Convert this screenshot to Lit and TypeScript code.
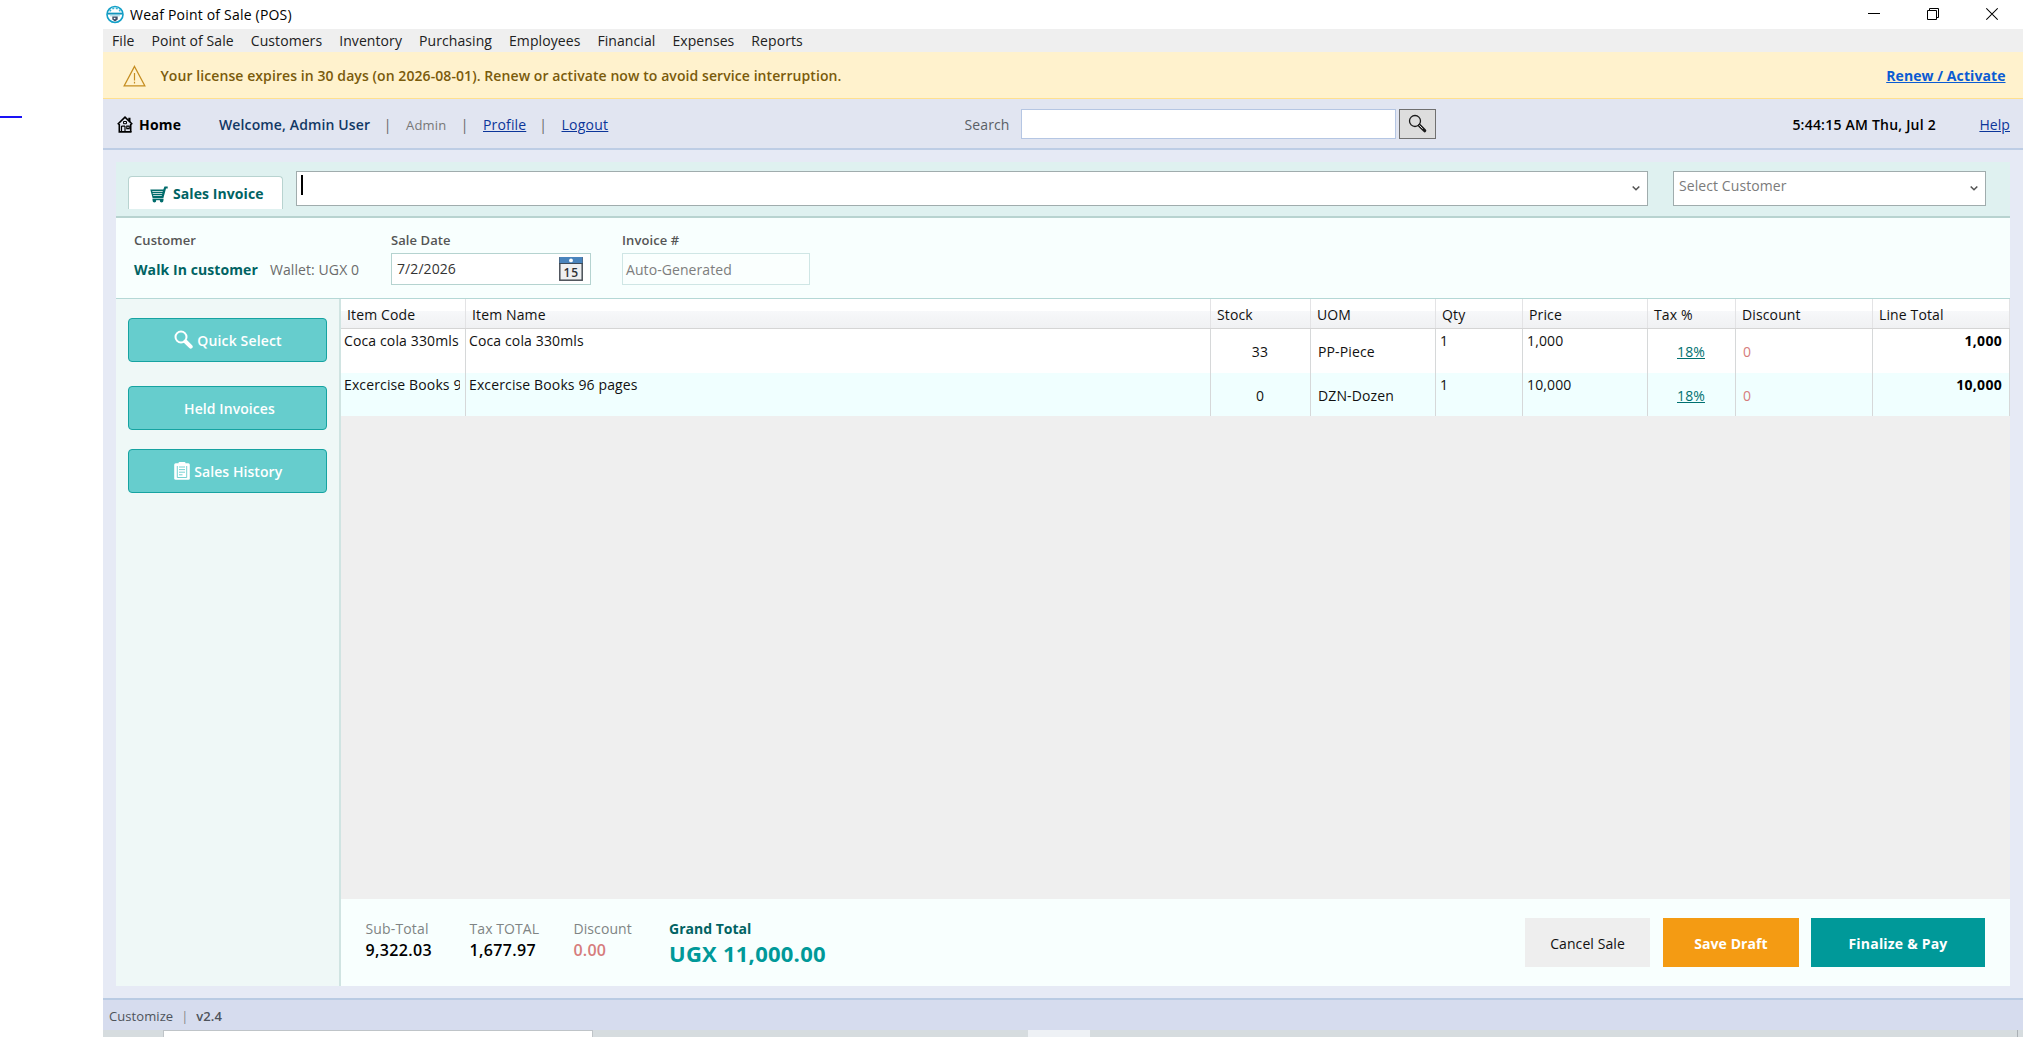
import { LitElement, html, css } from "lit";
import { customElement } from "lit/decorators.js";

const MENU = ["File", "Point of Sale", "Customers", "Inventory", "Purchasing", "Employees", "Financial", "Expenses", "Reports"];
const COLUMNS = ["Item Code", "Item Name", "Stock", "UOM", "Qty", "Price", "Tax %", "Discount", "Line Total"];
const ITEMS = [
  { code: "Coca cola 330mls", name: "Coca cola 330mls", stock: "33", uom: "PP-Piece", qty: "1", price: "1,000", tax: "18%", discount: "0", total: "1,000" },
  { code: "Excercise Books 96 pages", name: "Excercise Books 96 pages", stock: "0", uom: "DZN-Dozen", qty: "1", price: "10,000", tax: "18%", discount: "0", total: "10,000" },
];

const logoIcon = html`<svg class="logo" width="18" height="19" viewBox="0 0 18 19">
  <circle cx="9" cy="9.500" r="8" fill="#fff" stroke="#12a0c8" stroke-width="1.600"/>
  <path d="M3.800 6.300A6 6 0 0 1 14.200 6.300" fill="none" stroke="#35b3d2" stroke-width="1.500" stroke-dasharray="2 1.500"/>
  <path d="M1.500 8.600h15" stroke="#1295bd" stroke-width="1.900"/>
  <path d="M4 10.800h10" stroke="#9bd5e5" stroke-width="1"/>
  <path d="M6.300 11.600h5.400v3L9 16.600l-2.700-2z" fill="#3d4f68"/><path d="M7.800 12.800h1.600v1.300H7.800z" fill="#fff"/></svg>`;
const warnIcon = html`<svg class="warn" width="23" height="22" viewBox="0 0 23 22">
  <path d="M11.500 1.500 21.800 20.800H1.200z" fill="none" stroke="#c58d20" stroke-width="1.300"/>
  <path d="M11.500 8v7.500M11.500 16.800v1.600" stroke="#c58d20" stroke-width="1.200"/></svg>`;
const homeIcon = html`<svg class="home-icon" width="16" height="17" viewBox="0 0 16 17">
  <path d="M2.300 8v8h11.400V8M.7 8.300 8 1.200l7.300 7.100" fill="none" stroke="#000" stroke-width="1.600"/>
  <path d="M11.300 1.800h2.200v4.500l-2.200-2z" fill="#000"/>
  <path d="M6.500 5.500h3v2.200h-3z" fill="none" stroke="#000"/>
  <path d="M4.500 10v6M8 10v6M4.500 10.200H8M9.800 10.200h2.400v2.400H9.800zM2 15.500h12.500" fill="none" stroke="#000" stroke-width="1.200"/></svg>`;
const lensIcon = (cls: string) => html`<svg class=${cls} width="19" height="19" viewBox="0 0 19 19">
  <circle class="ring" cx="7" cy="7" r="5.500" fill="none" stroke="currentColor" stroke-width="1.300"/>
  <path class="handle" d="m11.500 11.500 5.200 5.200" fill="none" stroke="currentColor" stroke-width="3.200" stroke-linecap="round"/>
  <path class="shine" d="m11.300 11.300 3.400 3.400" stroke="#ddd" stroke-width="1"/></svg>`;
const cartIcon = html`<svg class="cart" width="18" height="17" viewBox="0 0 18 17">
  <path d="M.3 3.500h13L14.500.6H17.700v2H16L13.400 12H2.600z" fill="#006b6b"/>
  <path d="M2.300 5.500h10.400M2.700 7.500h9.600M3.200 9.500h8.600" stroke="#cfe3e2" stroke-width=".9"/>
  <path d="M2.500 13.400h11" stroke="#006b6b" stroke-width="1.600"/>
  <circle cx="4.400" cy="14.800" r="1.800" fill="#006b6b"/><circle cx="11.600" cy="14.800" r="1.800" fill="#006b6b"/></svg>`;
const clipIcon = html`<svg class="clip" width="16" height="18" viewBox="0 0 16 18">
  <rect x=".2" y="1.300" width="15.600" height="16.500" rx="1.500" fill="#fff"/><rect x="4.500" y="0" width="7" height="3.500" rx="1" fill="#fff"/>
  <path d="M3.300 4v11.500h9.400V4M5 5h6M5 7.600h6M5 10.200h6M5 12.800h3.500" fill="none" stroke="#66cdcd" stroke-width=".9"/></svg>`;
const calendarIcon = html`<svg class="calendar" width="24" height="24" viewBox="0 0 24 24">
  <rect x=".8" y=".8" width="22.400" height="22.400" fill="#eeeff1" stroke="#4a4f57" stroke-width="1.500"/>
  <rect x=".5" y="0" width="23" height="6.500" fill="#4a84bd"/><path d="M0 6.500h24" stroke="#3c4a5a"/><circle cx="12" cy="3.400" r="1.900" fill="#fff"/>
  <text x="12.200" y="19.500" text-anchor="middle" font-size="12" letter-spacing=".8" font-weight="600" fill="#2e3136">15</text></svg>`;
const chevron = html`<svg width="8" height="7" viewBox="0 0 8 7"><path d="M.7 1.500 4 4.700 7.300 1.500" fill="none" stroke="#555" stroke-width="1.600"/></svg>`;

@customElement("pos-titlebar")
class PosTitlebar extends LitElement {
  static styles = css`
    :host { display: block; }
    .title { height: 29px; display: flex; align-items: center; background: #fff; padding-left: 3px; }
    .name { margin-left: 6px; padding-top: 1px; flex: 1; letter-spacing: .2px; color: #000; }
    .controls { display: flex; gap: 47px; padding: 0 25px 1px 0; }
    .menu { display: flex; gap: 17px; height: 22.500px; padding-left: 9px; background: #efefef; color: #212121; line-height: 23px; }
  `;
  render() {
    return html`<div class="title">${logoIcon}<span class="name">Weaf Point of Sale (POS)</span>
      <div class="controls">
        <svg width="12" height="14"><path d="M0 6.500h12" stroke="#000"/></svg>
        <svg width="12" height="14"><path d="M.5 3.500h9v9h-9zM2.500 3.500v-2h9v9h-2" fill="none" stroke="#000"/></svg>
        <svg width="12" height="14"><path d="m.3 1.300 11.400 11.400M11.700 1.300.3 12.700" stroke="#000" stroke-width="1.100"/></svg>
      </div></div>
      <nav class="menu">${MENU.map((m) => html`<span>${m}</span>`)}</nav>`;
  }
}

@customElement("pos-header")
class PosHeader extends LitElement {
  static styles = css`
    :host { display: block; }
    .banner { box-sizing: border-box; height: 47.500px; display: flex; align-items: center; padding: 0 17.500px 0 20px; background: #fff2cd; border-bottom: 1.500px solid #ffe08f; color: #7a5b0b; font-weight: 600; }
    .banner span { padding-top: 1.500px; }
    .warn { margin-right: 14.500px; padding-top: 2px; }
    .msg { flex: 1; }
    .renew { color: #0a5bd3; font-weight: 700; text-decoration: underline; }
    .nav { box-sizing: border-box; height: 51px; display: flex; align-items: center; padding: 0 13px 0 14px; background: #e1e5f1; border-bottom: 2px solid #bdcde5; }
    .nav > span { padding-top: 2px; }
    .home-icon { padding-top: 1px; }
    .home { width: 42px; margin: 0 38px 0 6px; font-weight: 700; letter-spacing: .2px; color: #000; }
    .welcome { width: 150.500px; font-weight: 600; letter-spacing: .13px; color: #123865; }
    .sep { width: 36.500px; text-align: center; color: #666; }
    .role { width: 40.500px; font-size: 13px; letter-spacing: .2px; color: #777; }
    .link { color: #0c3599; text-decoration: underline; }
    .profile { width: 42px; letter-spacing: .15px; }
    .logout { flex: 1; letter-spacing: .25px; }
    .label { color: #5a5f66; margin-right: 12px; }
    .box { box-sizing: border-box; width: 375px; height: 30px; border: 1px solid #b5c6e3; background: #fff; }
    .find { box-sizing: border-box; width: 37px; height: 30px; margin: 0 356px 0 3px; border: 1px solid #707070; background: #ddd; color: #1a1a1a; display: grid; place-items: center; }
    .clock { width: 187px; font-weight: 600; letter-spacing: .22px; color: #000; }
  `;
  render() {
    return html`<div class="banner">${warnIcon}<span class="msg">Your license expires in 30 days (on 2026-08-01). Renew or activate now to avoid service interruption.</span><span class="renew">Renew / Activate</span></div>
      <div class="nav">${homeIcon}<span class="home">Home</span><span class="welcome">Welcome, Admin User</span><span class="sep">|</span><span class="role">Admin</span><span class="sep">|</span><span class="link profile">Profile</span><span class="sep">|</span><span class="logout"><span class="link">Logout</span></span>
        <span class="label">Search</span><div class="box"></div><div class="find">${lensIcon("lens")}</div>
        <span class="clock">5:44:15 AM Thu, Jul 2</span><span class="link">Help</span></div>`;
  }
}

@customElement("invoice-bar")
class InvoiceBar extends LitElement {
  static styles = css`
    :host { display: block; }
    .strip { box-sizing: border-box; height: 56px; display: flex; align-items: flex-start; padding: 9px 24px 0 12px; background: #dff1f0; border-bottom: 2px solid #b8d3d0; }
    .tab { box-sizing: border-box; width: 155px; height: 33px; margin: 5px 13px 0 0; border: 1.500px solid #b8d3d0; border-bottom: 0; border-radius: 4px 4px 0 0; background: #fff; display: flex; align-items: center; padding-left: 21px; gap: 5px; font-weight: 700; color: #006363; }
    .tab span { margin-top: 1px; }
    .cart { margin-top: 3px; }
    .combo { box-sizing: border-box; height: 35px; border: 1px solid #a0acad; background: #fff; display: flex; align-items: flex-start; padding: 4px 7px 0 4px; }
    .product { flex: 1; }
    .customer { width: 313px; margin-left: 25px; color: #7b7b7b; padding-left: 5px; }
    .fill { flex: 1; }
    .caret { width: 2px; height: 20px; margin-top: -1px; background: #000; }
    .combo svg { margin-top: 9px; }
    .info { box-sizing: border-box; height: 81px; display: flex; align-items: flex-start; padding: 13px 18px 0; background: #f8fffe; border-bottom: 1px solid #b5d8d6; }
    .label { font-size: 13px; line-height: 18px; font-weight: 600; color: #555; margin-bottom: 4px; }
    .who { width: 257px; }
    .value { height: 32px; display: flex; align-items: center; padding-top: 1px; }
    .walk { width: 136px; font-weight: 700; color: #006363; }
    .wallet { color: #6b6b6b; }
    .field { box-sizing: border-box; height: 32px; display: flex; align-items: center; background: #fff; }
    .date { width: 200px; margin-right: 31px; border: 1.500px solid #b5d3d0; padding: 0 7px 0 5px; color: #333; }
    .date .fill { padding-bottom: 1px; }
    .auto { width: 188px; border: 1px solid #cfe6e5; padding: 1.500px 3px 0; color: #7d7d7d; background: #fafffe; }
  `;
  render() {
    return html`<div class="strip"><div class="tab">${cartIcon}<span>Sales Invoice</span></div>
        <div class="combo product"><div class="caret"></div><div class="fill"></div>${chevron}</div>
        <div class="combo customer"><span class="fill">Select Customer</span>${chevron}</div></div>
      <div class="info">
        <div class="who"><div class="label">Customer</div><div class="value"><span class="walk">Walk In customer</span><span class="wallet">Wallet: UGX 0</span></div></div>
        <div><div class="label">Sale Date</div><div class="field date"><span class="fill">7/2/2026</span>${calendarIcon}</div></div>
        <div><div class="label">Invoice #</div><div class="field auto">Auto-Generated</div></div>
      </div>`;
  }
}

@customElement("side-actions")
class SideActions extends LitElement {
  static styles = css`
    :host { box-sizing: border-box; display: flex; flex-direction: column; width: 225px; padding: 18.500px 12px; background: #eff8f7; border-right: 2px solid #d0e4e2; }
    .btn { box-sizing: border-box; height: 44px; border: 1.500px solid #16a3a1; border-radius: 4px; background: #66cdcd; color: #fff; font-weight: 600; display: flex; align-items: center; justify-content: center; gap: 4px; }
    .held { margin: 24.500px 0 19px; padding-left: 4px; }
    .quick { padding-left: 1px; letter-spacing: .15px; }
    .history { padding-left: 1px; gap: 4.500px; }
    .btn span { padding-top: 2px; }
    .thick .ring { stroke-width: 2px; }
    .thick .handle { stroke-width: 4px; }
    .thick .shine { display: none; }
  `;
  render() {
    return html`<div class="btn quick">${lensIcon("thick")}<span>Quick Select</span></div>
      <div class="btn held"><span>Held Invoices</span></div>
      <div class="btn history">${clipIcon}<span>Sales History</span></div>`;
  }
}

@customElement("item-grid")
class ItemGrid extends LitElement {
  static styles = css`
    :host { display: block; flex: 1; background: #efefef; }
    .row { display: grid; grid-template-columns: 125px 745px 100px 125px 87px 125px 88px 137px 1fr; height: 44px; background: #fff; color: #111; letter-spacing: .13px; }
    .alt { height: 43px; background: #f0ffff; }
    .head { height: 30px; box-sizing: border-box; border-bottom: 1px solid #d5d5d5; background: linear-gradient(#fff 0 40%, #f7f8fa 40%, #f0f1f3); }
    .cell { box-sizing: border-box; border-right: 1px solid #d6d8d9; padding: 2px 4px 0 3px; line-height: 20px; white-space: nowrap; overflow: hidden; }
    .head .cell { border-color: #e3e3e5; line-height: 31px; padding: 0 0 0 6px; }
    .clip { overflow: hidden; width: 116px; }
    .row .mid { padding-top: 13px; }
    .center { text-align: center; }
    .uom, .disc { padding-left: 7px; }
    .qty, .price { padding-left: 4px; }
    .tax { color: #007070; text-decoration: underline; }
    .disc { color: #d67c7c; }
    .total { text-align: right; padding-right: 7px; font-weight: 700; letter-spacing: .3px; color: #000; }
  `;
  render() {
    return html`<div class="row head">${COLUMNS.map((c) => html`<div class="cell">${c}</div>`)}</div>
      ${ITEMS.map((r, i) => html`<div class="row ${i % 2 ? "alt" : ""}">
        <div class="cell"><div class="clip">${r.code}</div></div><div class="cell">${r.name}</div>
        <div class="cell mid center">${r.stock}</div><div class="cell mid uom">${r.uom}</div>
        <div class="cell qty">${r.qty}</div><div class="cell price">${r.price}</div>
        <div class="cell mid center"><span class="tax">${r.tax}</span></div><div class="cell mid disc">${r.discount}</div>
        <div class="cell total">${r.total}</div></div>`)}`;
  }
}

@customElement("totals-bar")
class TotalsBar extends LitElement {
  static styles = css`
    :host { box-sizing: border-box; display: flex; align-items: flex-start; height: 87px; padding: 19px 25px 0 24.500px; background: #f8fffe; }
    .sum { box-sizing: border-box; padding-top: 1px; color: #7f8484; line-height: 20px; }
    .sub { width: 104px; letter-spacing: .15px; }
    .tx { width: 104px; }
    .dis { width: 95.500px; }
    .num { font-size: 16px; line-height: 22px; font-weight: 600; letter-spacing: .35px; color: #000; }
    .red { color: #d67c7c; letter-spacing: .2px; }
    .grand { flex: 1; font-weight: 700; letter-spacing: 0; color: #006363; }
    .big { font-size: 22px; line-height: 28px; letter-spacing: .25px; color: #009999; }
    .btn { box-sizing: border-box; height: 49px; padding-top: 2px; display: grid; place-items: center; font-weight: 700; color: #fff; }
    .cancel { width: 125px; background: #eee; color: #111; font-weight: 400; }
    .draft { width: 136px; margin: 0 12px 0 13px; background: #f49b13; }
    .pay { width: 174px; background: #009999; letter-spacing: .2px; }
  `;
  render() {
    return html`<div class="sum sub">Sub-Total<div class="num">9,322.03</div></div>
      <div class="sum tx">Tax TOTAL<div class="num">1,677.97</div></div>
      <div class="sum dis">Discount<div class="num red">0.00</div></div>
      <div class="sum grand">Grand Total<div class="big">UGX 11,000.00</div></div>
      <div class="btn cancel">Cancel Sale</div><div class="btn draft">Save Draft</div><div class="btn pay">Finalize &amp; Pay</div>`;
  }
}

@customElement("app-root")
class AppRoot extends LitElement {
  static styles = css`
    :host { display: flex; width: 2023px; height: 1037px; overflow: hidden; background: #fff; font-family: "Open Sans", "Noto Sans", sans-serif; font-size: 14px; line-height: 20px; letter-spacing: .08px; color: #111; white-space: nowrap; }
    .margin { width: 103px; padding-top: 115.500px; box-sizing: border-box; }
    .dash { width: 22px; height: 2px; background: #1a12f5; }
    .window { flex: 1; display: flex; flex-direction: column; background: #e6eaf5; }
    .panel { flex: 1; min-height: 0; margin: 12px 13px 12px; display: flex; flex-direction: column; }
    .body { flex: 1; display: flex; min-height: 0; }
    .main { flex: 1; display: flex; flex-direction: column; }
    .status { box-sizing: border-box; height: 32px; border-top: 2px solid #b9cbe3; background: #d6dcee; padding: 2px 0 0 6px; display: flex; align-items: center; font-size: 13px; color: #4e535b; }
    .bar { width: 23px; text-align: center; color: #888; }
    .ver { font-weight: 600; }
    .taskbar { height: 7px; background: #d6dcdf; display: flex; padding-left: 60px; }
    .search { box-sizing: border-box; width: 430px; background: #fff; border: 1px solid #bfc4c8; border-bottom: 0; }
    .task { width: 62px; margin-left: 435px; background: #eef1f5; }
    .edge { margin-left: auto; margin-right: 5px; width: 1px; background: #aab0b5; }
  `;
  render() {
    return html`<div class="margin"><div class="dash"></div></div>
      <div class="window"><pos-titlebar></pos-titlebar><pos-header></pos-header>
        <div class="panel"><invoice-bar></invoice-bar>
          <div class="body"><side-actions></side-actions><div class="main"><item-grid></item-grid><totals-bar></totals-bar></div></div></div>
        <div class="status"><span>Customize</span><span class="bar">|</span><span class="ver">v2.4</span></div>
        <div class="taskbar"><div class="search"></div><div class="task"></div><div class="edge"></div></div>
      </div>`;
  }
}
